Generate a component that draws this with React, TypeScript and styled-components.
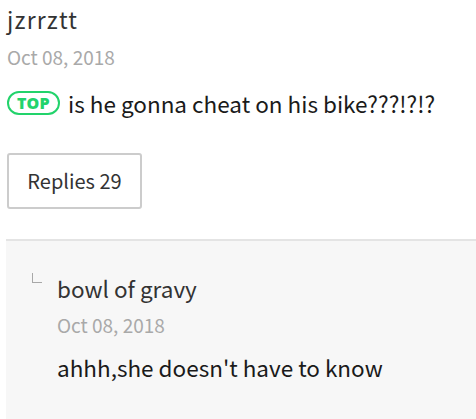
import React from "react";
import styled, { createGlobalStyle } from "styled-components";

const GlobalStyle = createGlobalStyle`
  html, body { margin: 0; padding: 0; background: #ffffff; }
  body { font-family: "Noto Sans CJK SC", "Noto Sans", sans-serif; }
`;

const Page = styled.div`
  display: flex;
  flex-direction: column;
  padding-left: 6px;
  width: 476px;
  height: 419px;
  box-sizing: border-box;
  overflow: hidden;
`;

const Comment = styled.div`
  display: flex;
  flex-direction: column;
  padding: 4px 0 0 1px;
`;

const Author = styled.div<{ $size: number; $spacing?: number }>`
  font-size: ${(p) => p.$size}px;
  letter-spacing: ${(p) => p.$spacing ?? 0}px;
  line-height: 30px;
  color: #333333;
`;

const DateText = styled.div<{ $gap: number }>`
  margin-top: ${(p) => p.$gap}px;
  font-size: 19px;
  line-height: 24px;
  color: #a9a9a9;
`;

const Body = styled.div<{ $gap: number }>`
  display: flex;
  align-items: center;
  gap: 8px;
  margin-top: ${(p) => p.$gap}px;
  font-size: 22.5px;
  line-height: 30px;
  color: #1a1a1a;
`;

const TopBadge = styled.span`
  display: inline-flex;
  align-items: center;
  justify-content: center;
  box-sizing: border-box;
  width: 53px;
  height: 24px;
  border: 2.5px solid #22d36b;
  border-radius: 12px;
  color: #22d36b;
  font-family: "Noto Sans", "Noto Sans CJK SC", sans-serif;
  font-weight: 900;
  font-size: 16px;
  line-height: 16px;
  letter-spacing: 0.3px;
`;

const RepliesButton = styled.button`
  align-self: flex-start;
  box-sizing: border-box;
  width: 135px;
  height: 56px;
  margin-top: 35px;
  border: 2px solid #cccccc;
  border-radius: 3px;
  background: #ffffff;
  font-family: "Noto Sans CJK SC", "Noto Sans", sans-serif;
  font-size: 20px;
  line-height: 20px;
  color: #333333;
  padding: 0;
`;

const ReplyPanel = styled.div`
  flex: 1;
  margin-top: 30px;
  border-top: 2px solid #e4e4e4;
  background: #f7f7f7;
  padding: 32px 0 0 26px;
  display: flex;
  align-items: flex-start;
  gap: 15px;
`;

const Corner = styled.span`
  box-sizing: border-box;
  width: 10px;
  height: 10px;
  border-left: 1px solid #a8a8a8;
  border-bottom: 1px solid #a8a8a8;
  flex-shrink: 0;
`;

const ReplyContent = styled.div`
  display: flex;
  flex-direction: column;
`;

export default function App() {
  return (
    <Page>
      <GlobalStyle />
      <Comment>
        <Author $size={23} $spacing={1.2}>jzrrztt</Author>
        <DateText $gap={11}>Oct 08, 2018</DateText>
        <Body $gap={19}>
          <TopBadge>TOP</TopBadge>
          is he gonna cheat on his bike???!?!?
        </Body>
        <RepliesButton>Replies 29</RepliesButton>
      </Comment>
      <ReplyPanel>
        <Corner />
        <ReplyContent>
          <Author $size={22.5}>bowl of gravy</Author>
          <DateText $gap={10}>Oct 08, 2018</DateText>
          <Body $gap={14.5}>ahhh,she doesn't have to know</Body>
        </ReplyContent>
      </ReplyPanel>
    </Page>
  );
}
